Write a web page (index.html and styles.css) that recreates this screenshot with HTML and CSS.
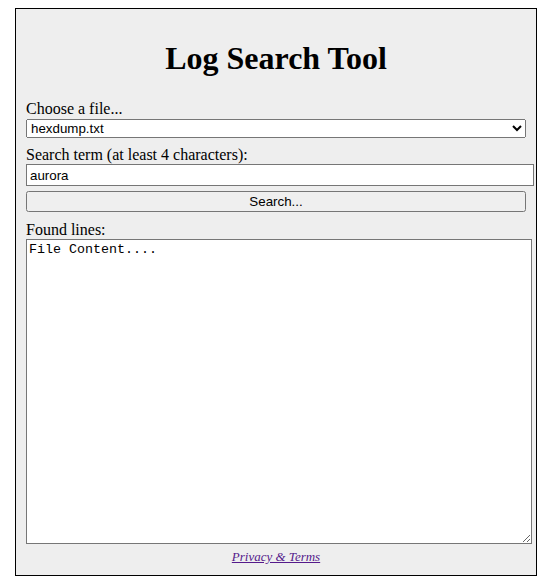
FILE: index.html
```html
<!DOCTYPE html>
<html lang="en">
<head>
<meta charset="utf-8">
<title>Log Search Tool</title>
<link rel="stylesheet" href="styles.css">
</head>
<body>
<div class="box">
  <h1 class="title">Log Search Tool</h1>
  <label class="lbl lbl-first" for="file">Choose a file...</label>
  <select id="file" class="ctl select">
    <option>hexdump.txt</option>
  </select>
  <label class="lbl" for="term">Search term (at least 4 characters):</label>
  <input id="term" class="ctl input" type="text" value="aurora">
  <button class="ctl btn" type="button">Search...</button>
  <label class="lbl lbl-found" for="out">Found lines:</label>
  <textarea id="out" class="out">File Content....</textarea>
  <div class="footer"><a class="link" href="#privacy">Privacy &amp; Terms</a></div>
</div>
</body>
</html>
```

FILE: styles.css
```css
html, body {
  background: #ffffff;
}
body {
  margin: 8px 0 0 15px;
  font-family: "Liberation Serif", "Times New Roman", serif;
  font-size: 16px;
  color: #000;
}
.box {
  width: 500px;
  padding: 10px 10px 11px;
  border: 1px solid #000;
  background: #eeeeee;
  display: flex;
  flex-direction: column;
  align-items: flex-start;
}
.title {
  align-self: stretch;
  text-align: center;
  font-size: 32px;
  font-weight: bold;
  line-height: 37px;
  margin: 21px 0 22px;
}
.lbl {
  display: block;
  line-height: 18px;
  margin-top: 8px;
}
.lbl-first {
  margin-top: 1px;
}
.lbl-found {
  margin-top: 9px;
}
.ctl {
  font-family: "Liberation Sans", Arial, sans-serif;
  font-size: 13.33px;
}
.select {
  width: 500px;
  height: 19px;
  margin-top: 1px;
  box-sizing: border-box;
}
.input {
  width: 500px;
  height: 16px;
  box-sizing: content-box;
  border: 1px solid #767676;
  padding: 2px 3px;
  margin: 0;
}
.btn {
  width: 500px;
  height: 21px;
  margin-top: 5px;
  box-sizing: border-box;
}
.out {
  width: 500px;
  height: 299px;
  box-sizing: content-box;
  padding: 2px;
  border: 1px solid #767676;
  margin: 0;
  font-family: "Liberation Mono", "Courier New", monospace;
  font-size: 13.33px;
  resize: both;
}
.footer {
  align-self: stretch;
  text-align: center;
  margin-top: 5px;
  font-size: 13px;
  line-height: 15px;
}
.link {
  font-style: italic;
  color: #551a8b;
}
```
